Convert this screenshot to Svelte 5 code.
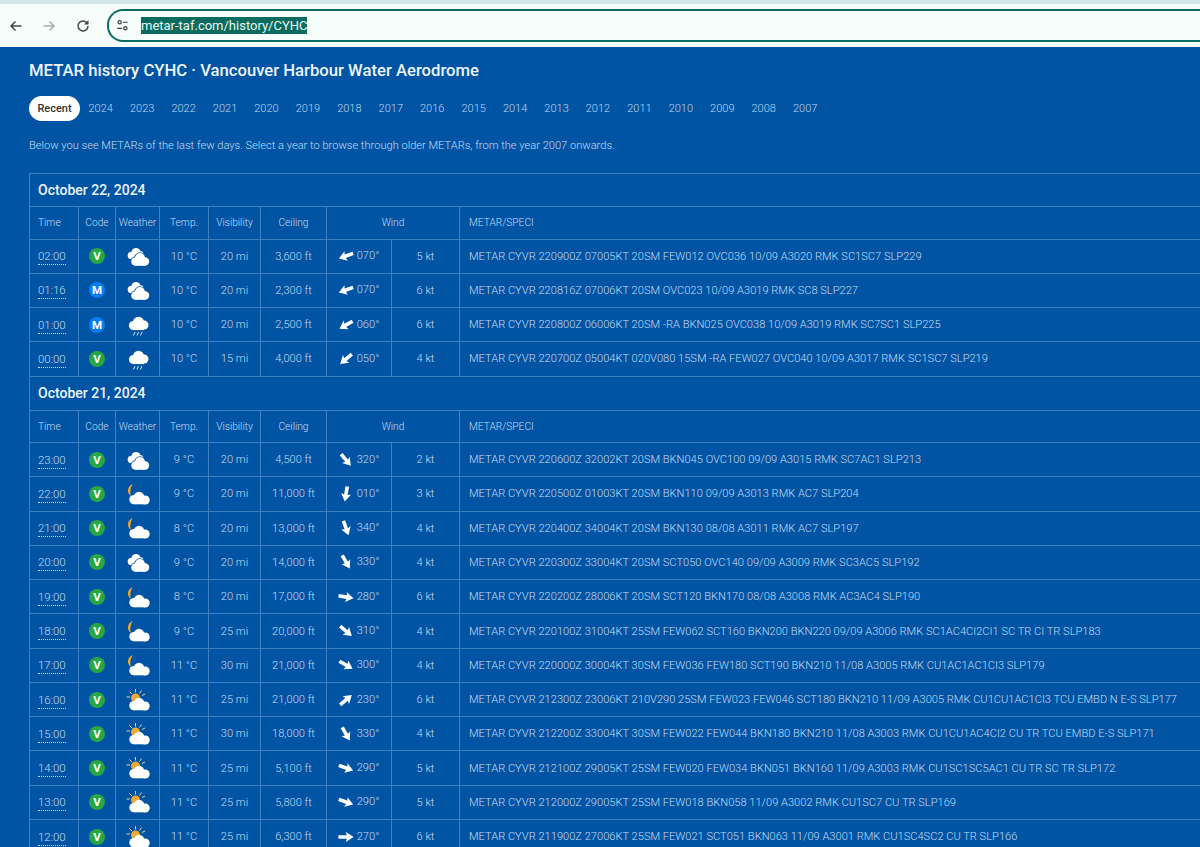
<script>
  const years = [2024,2023,2022,2021,2020,2019,2018,2017,2016,2015,2014,2013,2012,2011,2010,2009,2008,2007];
  const days = [
    { date: 'October 22, 2024', rows: [
      ['02:00','V','ovc','10 °C','20 mi','3,600 ft',70,'070°','5 kt','METAR CYVR 220900Z 07005KT 20SM FEW012 OVC036 10/09 A3020 RMK SC1SC7 SLP229'],
      ['01:16','M','ovc','10 °C','20 mi','2,300 ft',70,'070°','6 kt','METAR CYVR 220816Z 07006KT 20SM OVC023 10/09 A3019 RMK SC8 SLP227'],
      ['01:00','M','rain','10 °C','20 mi','2,500 ft',60,'060°','6 kt','METAR CYVR 220800Z 06006KT 20SM -RA BKN025 OVC038 10/09 A3019 RMK SC7SC1 SLP225'],
      ['00:00','V','rain','10 °C','15 mi','4,000 ft',50,'050°','4 kt','METAR CYVR 220700Z 05004KT 020V080 15SM -RA FEW027 OVC040 10/09 A3017 RMK SC1SC7 SLP219'],
    ]},
    { date: 'October 21, 2024', rows: [
      ['23:00','V','ovc','9 °C','20 mi','4,500 ft',320,'320°','2 kt','METAR CYVR 220600Z 32002KT 20SM BKN045 OVC100 09/09 A3015 RMK SC7AC1 SLP213'],
      ['22:00','V','moon','9 °C','20 mi','11,000 ft',10,'010°','3 kt','METAR CYVR 220500Z 01003KT 20SM BKN110 09/09 A3013 RMK AC7 SLP204'],
      ['21:00','V','moon','8 °C','20 mi','13,000 ft',340,'340°','4 kt','METAR CYVR 220400Z 34004KT 20SM BKN130 08/08 A3011 RMK AC7 SLP197'],
      ['20:00','V','ovc','9 °C','20 mi','14,000 ft',330,'330°','4 kt','METAR CYVR 220300Z 33004KT 20SM SCT050 OVC140 09/09 A3009 RMK SC3AC5 SLP192'],
      ['19:00','V','moon','8 °C','20 mi','17,000 ft',280,'280°','6 kt','METAR CYVR 220200Z 28006KT 20SM SCT120 BKN170 08/08 A3008 RMK AC3AC4 SLP190'],
      ['18:00','V','moon','9 °C','25 mi','20,000 ft',310,'310°','4 kt','METAR CYVR 220100Z 31004KT 25SM FEW062 SCT160 BKN200 BKN220 09/09 A3006 RMK SC1AC4CI2CI1 SC TR CI TR SLP183'],
      ['17:00','V','moon','11 °C','30 mi','21,000 ft',300,'300°','4 kt','METAR CYVR 220000Z 30004KT 30SM FEW036 FEW180 SCT190 BKN210 11/08 A3005 RMK CU1AC1AC1CI3 SLP179'],
      ['16:00','V','sun','11 °C','25 mi','21,000 ft',230,'230°','6 kt','METAR CYVR 212300Z 23006KT 210V290 25SM FEW023 FEW046 SCT180 BKN210 11/09 A3005 RMK CU1CU1AC1CI3 TCU EMBD N E-S SLP177'],
      ['15:00','V','sun','11 °C','30 mi','18,000 ft',330,'330°','4 kt','METAR CYVR 212200Z 33004KT 30SM FEW022 FEW044 BKN180 BKN210 11/08 A3003 RMK CU1CU1AC4CI2 CU TR TCU EMBD E-S SLP171'],
      ['14:00','V','sun','11 °C','25 mi','5,100 ft',290,'290°','5 kt','METAR CYVR 212100Z 29005KT 25SM FEW020 FEW034 BKN051 BKN160 11/09 A3003 RMK CU1SC1SC5AC1 CU TR SC TR SLP172'],
      ['13:00','V','sun','11 °C','25 mi','5,800 ft',290,'290°','5 kt','METAR CYVR 212000Z 29005KT 25SM FEW018 BKN058 11/09 A3002 RMK CU1SC7 CU TR SLP169'],
      ['12:00','V','sun','11 °C','25 mi','6,300 ft',270,'270°','6 kt','METAR CYVR 211900Z 27006KT 25SM FEW021 SCT051 BKN063 11/09 A3001 RMK CU1SC4SC2 CU TR SLP166'],
    ]},
  ];
</script>

{#snippet bigCloud()}
  <g fill="#fff">
    <circle cx="8" cy="17.6" r="4.700"/><circle cx="13" cy="15.200" r="5.400"/><circle cx="19.200" cy="18" r="4.500"/>
    <rect x="8" y="17" width="11.200" height="5.300"/>
  </g>
{/snippet}

<div class="chrome">
  <div class="strip"></div>
  <div class="bar">
    <svg class="nav" viewBox="0 0 16 16"><path d="M13.5 8H3M7.500 3.500 3 8l4.500 4.500" fill="none" stroke="#454a4a" stroke-width="1.500"/></svg>
    <svg class="nav fwd" viewBox="0 0 16 16"><path d="M2.500 8H13M8.500 3.500 13 8l-4.500 4.500" fill="none" stroke="#a9aeae" stroke-width="1.500"/></svg>
    <svg class="nav reload" viewBox="0 0 16 16"><path d="M13 8a5 5 0 1 1-1.500-3.600L13 6" fill="none" stroke="#454a4a" stroke-width="1.500"/><path d="M13.500 2v4.500H9z" fill="#454a4a"/></svg>
    <div class="omni">
      <svg class="tune" viewBox="0 0 16 16" fill="none" stroke="#3c4343" stroke-width="1.500"><circle cx="4.500" cy="4" r="2"/><path d="M8.500 4h6M1.500 11.500h6"/><circle cx="11.500" cy="11.500" r="2"/></svg>
      <span class="url">metar-taf.com/history/CYHC</span>
    </div>
  </div>
</div>

<main>
  <h1>METAR history CYHC · Vancouver Harbour Water Aerodrome</h1>
  <nav class="years">
    <span class="pill">Recent</span>
    {#each years as y}<span class="year">{y}</span>{/each}
  </nav>
  <p class="intro">Below you see METARs of the last few days. Select a year to browse through older METARs, from the year 2007 onwards.</p>

  <table>
    <colgroup>
      <col class="w1" /><col class="w2" /><col class="w3" /><col class="w4" /><col class="w5" /><col class="w6" /><col class="w7" /><col class="w8" /><col />
    </colgroup>
    <tbody>
    {#each days as d, i}
      <tr class="day" class:later={i > 0}><th colspan="9">{d.date}</th></tr>
      <tr class="head">
        <td class="lead">Time</td><td class="c">Code</td><td class="c">Weather</td><td class="c">Temp.</td><td class="c">Visibility</td><td class="c">Ceiling</td><td class="c" colspan="2">Wind</td><td class="metar">METAR/SPECI</td>
      </tr>
      {#each d.rows as r}
        <tr class="row">
          <td class="lead"><span class="time">{r[0]}</span></td>
          <td class="c"><span class="badge" class:m={r[1] === 'M'}>{r[1]}</span></td>
          <td class="c">
            <svg class="wx" viewBox="0 0 24 24">
              {#if r[2] === 'ovc'}
                <g fill="#fff">
                  <circle cx="5.500" cy="11.500" r="3.800"/><circle cx="10" cy="8.500" r="4.500"/><circle cx="14" cy="10.500" r="3.500"/>
                  <rect x="5.500" y="10" width="8" height="5.300"/>
                </g>
                <g fill="#0054a3" stroke="#0054a3" stroke-width="1.600">
                  <circle cx="9.500" cy="17.500" r="4.300"/><circle cx="14" cy="14" r="5"/><circle cx="19" cy="17.500" r="4.200"/>
                </g>
                <g fill="#fff">
                  <circle cx="9.500" cy="17.500" r="4.300"/><circle cx="14" cy="14" r="5"/><circle cx="19" cy="17.500" r="4.200"/>
                  <rect x="9.500" y="16" width="9.500" height="5.800"/>
                </g>
              {:else if r[2] === 'rain'}
                <g fill="#fff">
                  <circle cx="7.500" cy="12.500" r="4.600"/><circle cx="12.500" cy="9.200" r="5.500"/><circle cx="18" cy="12" r="4.500"/>
                  <rect x="7.500" y="11" width="10.500" height="6.100"/>
                </g>
                <path d="M9 19 7.500 22.500M12.500 19 11 22.500M16 19 14.500 22.500" stroke="#d8e6f5" stroke-width="1" fill="none"/>
              {:else if r[2] === 'moon'}
                <path d="M6.700 2C1.500 4.500 .2 10 4.800 14 3.800 10 4.200 6 6.700 2z" fill="#f0a830"/>
                {@render bigCloud()}
              {:else}
                <path d="M9.500 1v3.500M3.500 3.500l2.500 2.500M15.500 2.500 13.500 5.500M.5 9h3.500M19 6l-3 1.500" stroke="#e6cf9c" stroke-width="1" fill="none"/>
                <circle cx="9.500" cy="10" r="4.500" fill="#f0a830"/>
                {@render bigCloud()}
              {/if}
            </svg>
          </td>
          <td class="c">{r[3]}</td>
          <td class="c">{r[4]}</td>
          <td class="c">{r[5]}</td>
          <td class="wind">
            <svg class="arrow" viewBox="-8 -8 16 16"><path transform="rotate({r[6] + 180})" d="M-1.800 7.600 L1.800 7.600 L1.800 -.8 L5 .2 L0 -7.600 L-5 .2 L-1.800 -.8z" fill="#fff"/></svg>
            <span>{r[7]}</span>
          </td>
          <td class="c">{r[8]}</td>
          <td class="metar">{r[9]}</td>
        </tr>
      {/each}
    {/each}
    </tbody>
  </table>
</main>

<style>
  :global(body) { margin: 0; background: #0054a3; overflow: hidden; font-family: Roboto, "Liberation Sans", sans-serif; }
  .chrome { background: #f6fdfb; height: 47px; }
  .strip { height: 4px; background: #d2e8e5; }
  .bar { display: flex; align-items: center; height: 43px; padding-left: 8px; }
  .nav { width: 16px; height: 16px; flex: none; }
  .fwd { margin-left: 17px; }
  .reload { margin-left: 18px; }
  .omni { margin-left: 16px; flex: 1; height: 29px; border: 2px solid #0b6b62; border-right: none; border-radius: 16px 0 0 16px; background: #f6fefb; display: flex; align-items: center; padding-left: 7px; }
  .tune { width: 13px; height: 13px; }
  .url { margin-left: 12px; background: #0b6b5e; color: #e9f7f3; font: 13px/17px Roboto, sans-serif; }
  main { padding: 0 0 0 29px; }
  h1 { margin: 0; padding-top: 14px; height: 28px; color: #eef5fc; font-size: 16.670px; font-weight: 500; line-height: 20px; }
  .years { display: flex; align-items: center; margin-top: 7px; height: 25px; font-size: 11px; color: #bcd6f1; font-weight: 300; }
  .pill { width: 51px; height: 25px; line-height: 25px; text-align: center; border-radius: 13px; background: #fff; color: #333; font-weight: 500; }
  .year { width: 41.440px; text-align: center; flex: none; }
  .intro { margin: 18px 0 0; height: 14px; font-size: 11.100px; line-height: 14px; color: #c4dcf5; font-weight: 300; }
  table { margin-top: 20px; width: 100%; table-layout: fixed; border-collapse: collapse; font-size: 11.100px; color: #c4dcf5; font-weight: 300; }
  .w1 { width: 49px; } .w2 { width: 37px; } .w3 { width: 44px; } .w4 { width: 49px; }
  .w5 { width: 52px; } .w6 { width: 66px; } .w7 { width: 65px; } .w8 { width: 68px; }
  td, th { border: 1px solid #3f80c2; padding: 0; }
  td:last-child, th:last-child { border-right: none; }
  .day th { height: 32px; padding-left: 8px; text-align: left; font-size: 14px; font-weight: 500; color: #eef5fc; }
  .day.later th { height: 33px; }
  .head td { height: 31.500px; font-size: 10.200px; }
  .row td { height: 33.270px; white-space: nowrap; }
  .lead { padding-left: 8px; }
  .c { text-align: center; }
  .time { border-bottom: 1px dotted #c4dcf5; padding-bottom: 1px; font-size: 11.400px; }
  .badge { display: inline-block; width: 16px; height: 16px; border-radius: 50%; background: #28a745; color: #fff; font-weight: 700; font-size: 11.500px; line-height: 16px; vertical-align: middle; }
  .badge.m { background: #0a7cf0; }
  .wx { width: 24px; height: 24px; display: block; margin: 0 auto; }
  .wind { padding-left: 11px; }
  .arrow { width: 16px; height: 16px; vertical-align: middle; }
  .metar { padding-left: 9px; }
</style>
